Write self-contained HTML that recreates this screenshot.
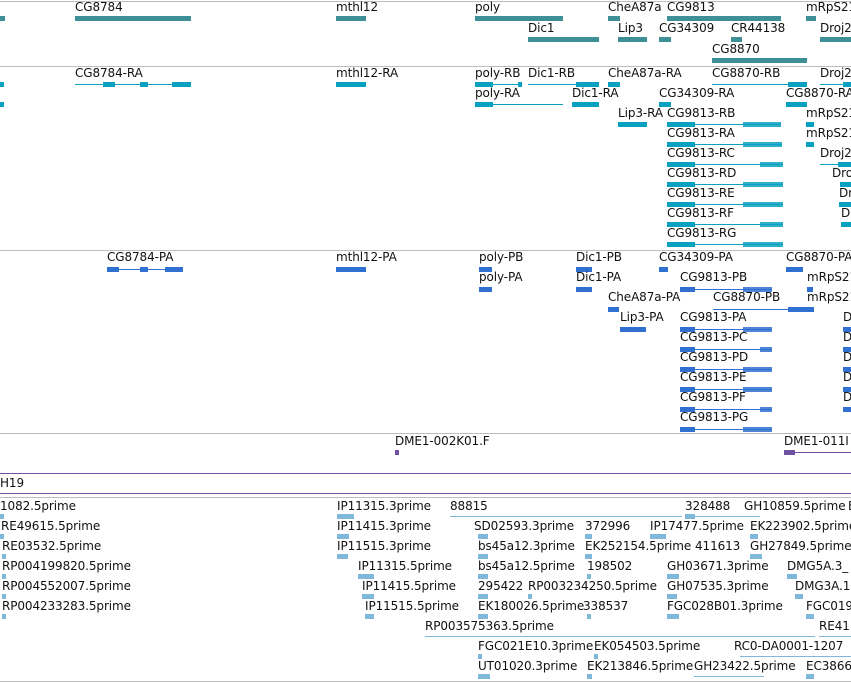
<!DOCTYPE html>
<html><head><meta charset="utf-8"><style>
body{margin:0;width:851px;height:682px;overflow:hidden;background:#fff;position:relative}
.t{position:absolute;font:12px "DejaVu Sans","Liberation Sans",sans-serif;line-height:13px;white-space:nowrap;color:#111;letter-spacing:-0.1px}
.b{position:absolute;height:5px}
.l{position:absolute;height:1px}
.h{position:absolute;left:0;width:851px;height:1px;background:#bdbdbd}
.g{background:#3f9096}.r{background:#0aa0c0}.p{background:#3070d0}.e{background:#80b8dc}.v{background:#7050a0}
</style></head><body>
<div class="h" style="top:1px"></div>
<div class="h" style="top:66px"></div>
<div class="h" style="top:250px"></div>
<div class="h" style="top:433px"></div>
<div class="h v" style="top:473px"></div>
<div class="h v" style="top:493px"></div>
<div class="h" style="top:497px"></div>
<div class="h" style="top:681px"></div>

<div class="b g" style="left:0;top:16px;width:5px"></div>
<div class="t" style="left:75px;top:1px">CG8784</div><div class="b g" style="left:75px;top:16px;width:116px"></div>
<div class="t" style="left:336px;top:1px">mthl12</div><div class="b g" style="left:336px;top:16px;width:30px"></div>
<div class="t" style="left:475px;top:1px">poly</div><div class="b g" style="left:475px;top:16px;width:88px"></div>
<div class="t" style="left:608px;top:1px">CheA87a</div><div class="b g" style="left:608px;top:16px;width:12px"></div>
<div class="t" style="left:667px;top:1px">CG9813</div><div class="b g" style="left:667px;top:16px;width:114px"></div>
<div class="t" style="left:806px;top:1px">mRpS21</div><div class="b g" style="left:806px;top:16px;width:10px"></div>
<div class="t" style="left:528px;top:22px">Dic1</div><div class="b g" style="left:528px;top:37px;width:71px"></div>
<div class="t" style="left:618px;top:22px">Lip3</div><div class="b g" style="left:618px;top:37px;width:29px"></div>
<div class="t" style="left:659px;top:22px">CG34309</div><div class="b g" style="left:659px;top:37px;width:12px"></div>
<div class="t" style="left:731px;top:22px">CR44138</div><div class="b g" style="left:731px;top:37px;width:11px"></div>
<div class="t" style="left:820px;top:22px">Droj2</div><div class="b g" style="left:820px;top:37px;width:31px"></div>
<div class="t" style="left:712px;top:43px">CG8870</div><div class="b g" style="left:712px;top:58px;width:95px"></div>

<div class="b r" style="left:0;top:82px;width:4px"></div><div class="b r" style="left:0;top:102px;width:4px"></div>
<div class="t" style="left:75px;top:67px">CG8784-RA</div><div class="l r" style="left:75px;top:84px;width:116px"></div><div class="b r" style="left:103px;top:82px;width:12px"></div><div class="b r" style="left:140px;top:82px;width:8px"></div><div class="b r" style="left:172px;top:82px;width:19px"></div>
<div class="t" style="left:336px;top:67px">mthl12-RA</div><div class="b r" style="left:336px;top:82px;width:30px"></div>
<div class="t" style="left:475px;top:67px">poly-RB</div><div class="l r" style="left:475px;top:84px;width:47px"></div><div class="b r" style="left:475px;top:82px;width:18px"></div><div class="b r" style="left:518px;top:82px;width:4px"></div>
<div class="t" style="left:528px;top:67px">Dic1-RB</div><div class="l r" style="left:528px;top:84px;width:71px"></div><div class="b r" style="left:576px;top:82px;width:23px"></div>
<div class="t" style="left:608px;top:67px">CheA87a-RA</div><div class="b r" style="left:608px;top:82px;width:12px"></div>
<div class="t" style="left:712px;top:67px">CG8870-RB</div><div class="l r" style="left:712px;top:84px;width:95px"></div><div class="b r" style="left:788px;top:82px;width:19px"></div>
<div class="t" style="left:820px;top:67px">Droj2</div><div class="l r" style="left:820px;top:84px;width:31px"></div><div class="b r" style="left:843px;top:82px;width:8px"></div>
<div class="t" style="left:475px;top:87px">poly-RA</div><div class="l r" style="left:475px;top:104px;width:88px"></div><div class="b r" style="left:475px;top:102px;width:18px"></div>
<div class="t" style="left:572px;top:87px">Dic1-RA</div><div class="b r" style="left:572px;top:102px;width:27px"></div>
<div class="t" style="left:659px;top:87px">CG34309-RA</div><div class="b r" style="left:659px;top:102px;width:12px"></div>
<div class="t" style="left:786px;top:87px">CG8870-RA</div><div class="b r" style="left:786px;top:102px;width:21px"></div>
<div class="t" style="left:618px;top:107px">Lip3-RA</div><div class="b r" style="left:618px;top:122px;width:29px"></div>
<div class="t" style="left:806px;top:107px">mRpS21</div><div class="b r" style="left:806px;top:122px;width:8px"></div>
<div class="t" style="left:806px;top:127px">mRpS21</div><div class="b r" style="left:806px;top:142px;width:8px"></div>
<div class="t" style="left:820px;top:147px">Droj2</div><div class="l r" style="left:820px;top:164px;width:31px"></div><div class="b r" style="left:838px;top:162px;width:13px"></div>
<div class="t" style="left:832px;top:167px">Dro</div><div class="b r" style="left:840px;top:182px;width:11px"></div>
<div class="t" style="left:839px;top:187px">Dr</div><div class="b r" style="left:839px;top:202px;width:12px"></div>
<div class="t" style="left:841px;top:207px">D</div><div class="b r" style="left:841px;top:222px;width:10px"></div>

<div class="t" style="left:667px;top:107px">CG9813-RB</div>
<div class="t" style="left:667px;top:127px">CG9813-RA</div>
<div class="t" style="left:667px;top:147px">CG9813-RC</div>
<div class="t" style="left:667px;top:167px">CG9813-RD</div>
<div class="t" style="left:667px;top:187px">CG9813-RE</div>
<div class="t" style="left:667px;top:207px">CG9813-RF</div>
<div class="t" style="left:667px;top:227px">CG9813-RG</div>
<div class="l r" style="left:667px;top:124px;width:114px"></div><div class="b r" style="left:667px;top:122px;width:28px"></div><div class="b r" style="left:743px;top:122px;width:38px;opacity:.85"></div>
<div class="l r" style="left:667px;top:144px;width:115px"></div><div class="b r" style="left:667px;top:142px;width:28px"></div><div class="b r" style="left:743px;top:142px;width:39px;opacity:.85"></div>
<div class="l r" style="left:667px;top:164px;width:116px"></div><div class="b r" style="left:667px;top:162px;width:28px"></div><div class="b r" style="left:760px;top:162px;width:23px;opacity:.85"></div>
<div class="l r" style="left:667px;top:184px;width:116px"></div><div class="b r" style="left:667px;top:182px;width:28px"></div><div class="b r" style="left:743px;top:182px;width:40px;opacity:.85"></div>
<div class="l r" style="left:667px;top:204px;width:116px"></div><div class="b r" style="left:667px;top:202px;width:28px"></div><div class="b r" style="left:743px;top:202px;width:40px;opacity:.85"></div>
<div class="l r" style="left:667px;top:224px;width:116px"></div><div class="b r" style="left:667px;top:222px;width:28px"></div><div class="b r" style="left:760px;top:222px;width:23px;opacity:.85"></div>
<div class="l r" style="left:667px;top:244px;width:116px"></div><div class="b r" style="left:667px;top:242px;width:28px"></div><div class="b r" style="left:743px;top:242px;width:40px;opacity:.85"></div>

<div class="t" style="left:107px;top:251px">CG8784-PA</div><div class="l p" style="left:107px;top:269px;width:76px"></div><div class="b p" style="left:107px;top:267px;width:12px"></div><div class="b p" style="left:140px;top:267px;width:8px"></div><div class="b p" style="left:165px;top:267px;width:18px"></div>
<div class="t" style="left:336px;top:251px">mthl12-PA</div><div class="b p" style="left:336px;top:267px;width:30px"></div>
<div class="t" style="left:479px;top:251px">poly-PB</div><div class="b p" style="left:479px;top:267px;width:13px"></div>
<div class="t" style="left:576px;top:251px">Dic1-PB</div><div class="b p" style="left:576px;top:267px;width:16px"></div>
<div class="t" style="left:659px;top:251px">CG34309-PA</div><div class="b p" style="left:659px;top:267px;width:9px"></div>
<div class="t" style="left:786px;top:251px">CG8870-PA</div><div class="b p" style="left:786px;top:267px;width:17px"></div>
<div class="t" style="left:479px;top:271px">poly-PA</div><div class="b p" style="left:479px;top:287px;width:13px"></div>
<div class="t" style="left:576px;top:271px">Dic1-PA</div><div class="b p" style="left:576px;top:287px;width:16px"></div>
<div class="t" style="left:807px;top:271px">mRpS21</div><div class="b p" style="left:807px;top:287px;width:6px"></div>
<div class="t" style="left:608px;top:291px">CheA87a-PA</div><div class="b p" style="left:608px;top:307px;width:11px"></div>
<div class="t" style="left:713px;top:291px">CG8870-PB</div><div class="l p" style="left:713px;top:309px;width:101px"></div><div class="b p" style="left:788px;top:307px;width:26px"></div>
<div class="t" style="left:807px;top:291px">mRpS21</div>
<div class="t" style="left:620px;top:311px">Lip3-PA</div><div class="b p" style="left:620px;top:327px;width:26px"></div>
<div class="t" style="left:680px;top:271px">CG9813-PB</div>
<div class="t" style="left:680px;top:311px">CG9813-PA</div>
<div class="t" style="left:680px;top:331px">CG9813-PC</div>
<div class="t" style="left:680px;top:351px">CG9813-PD</div>
<div class="t" style="left:680px;top:371px">CG9813-PE</div>
<div class="t" style="left:680px;top:391px">CG9813-PF</div>
<div class="t" style="left:680px;top:411px">CG9813-PG</div>
<div class="l p" style="left:680px;top:289px;width:92px"></div><div class="b p" style="left:680px;top:287px;width:15px"></div><div class="b p" style="left:743px;top:287px;width:29px;opacity:.85"></div>
<div class="l p" style="left:680px;top:329px;width:92px"></div><div class="b p" style="left:680px;top:327px;width:15px"></div><div class="b p" style="left:743px;top:327px;width:29px;opacity:.85"></div>
<div class="l p" style="left:680px;top:349px;width:92px"></div><div class="b p" style="left:680px;top:347px;width:15px"></div><div class="b p" style="left:760px;top:347px;width:12px;opacity:.85"></div>
<div class="l p" style="left:680px;top:369px;width:92px"></div><div class="b p" style="left:680px;top:367px;width:15px"></div><div class="b p" style="left:743px;top:367px;width:29px;opacity:.85"></div>
<div class="l p" style="left:680px;top:389px;width:92px"></div><div class="b p" style="left:680px;top:387px;width:15px"></div><div class="b p" style="left:743px;top:387px;width:29px;opacity:.85"></div>
<div class="l p" style="left:680px;top:409px;width:92px"></div><div class="b p" style="left:680px;top:407px;width:15px"></div><div class="b p" style="left:760px;top:407px;width:12px;opacity:.85"></div>
<div class="l p" style="left:680px;top:429px;width:92px"></div><div class="b p" style="left:680px;top:427px;width:15px"></div><div class="b p" style="left:743px;top:427px;width:29px;opacity:.85"></div>
<div class="t" style="left:843px;top:311px">D</div><div class="b p" style="left:843px;top:327px;width:8px"></div>
<div class="t" style="left:843px;top:331px">D</div><div class="b p" style="left:843px;top:347px;width:8px"></div>
<div class="t" style="left:843px;top:351px">D</div><div class="b p" style="left:843px;top:367px;width:8px"></div>
<div class="t" style="left:843px;top:371px">D</div><div class="b p" style="left:843px;top:387px;width:8px"></div>
<div class="t" style="left:843px;top:391px">D</div><div class="b p" style="left:843px;top:407px;width:8px"></div>

<div class="t" style="left:395px;top:435px">DME1-002K01.F</div><div class="b v" style="left:395px;top:450px;width:4px"></div>
<div class="t" style="left:784px;top:435px">DME1-011I</div><div class="l v" style="left:784px;top:452px;width:67px"></div><div class="b v" style="left:784px;top:450px;width:11px"></div>
<div class="t" style="left:0;top:477px">H19</div>

<div class="t" style="left:0;top:500px">1082.5prime</div><div class="b e" style="left:0;top:514px;width:4px"></div>
<div class="t" style="left:337px;top:500px">IP11315.3prime</div><div class="b e" style="left:337px;top:514px;width:17px"></div>
<div class="t" style="left:450px;top:500px">88815</div><div class="l e" style="left:450px;top:516px;width:232px"></div>
<div class="t" style="left:685px;top:500px">328488</div><div class="b e" style="left:685px;top:514px;width:10px"></div><div class="l e" style="left:685px;top:516px;width:75px"></div>
<div class="t" style="left:744px;top:500px">GH10859.5prime</div>
<div class="t" style="left:848px;top:500px">E</div>

<div class="t" style="left:1px;top:520px">RE49615.5prime</div><div class="b e" style="left:0;top:534px;width:4px"></div>
<div class="t" style="left:337px;top:520px">IP11415.3prime</div><div class="b e" style="left:337px;top:534px;width:12px"></div>
<div class="t" style="left:474px;top:520px">SD02593.3prime</div><div class="b e" style="left:478px;top:534px;width:10px"></div>
<div class="t" style="left:585px;top:520px">372996</div><div class="b e" style="left:585px;top:534px;width:7px"></div>
<div class="t" style="left:650px;top:520px">IP17477.5prime</div><div class="b e" style="left:650px;top:534px;width:16px"></div>
<div class="t" style="left:750px;top:520px">EK223902.5prime</div><div class="b e" style="left:750px;top:534px;width:8px"></div>

<div class="t" style="left:2px;top:540px">RE03532.5prime</div><div class="b e" style="left:2px;top:554px;width:4px"></div>
<div class="t" style="left:337px;top:540px">IP11515.3prime</div><div class="b e" style="left:337px;top:554px;width:11px"></div>
<div class="t" style="left:478px;top:540px">bs45a12.3prime</div><div class="b e" style="left:478px;top:554px;width:10px"></div>
<div class="t" style="left:585px;top:540px">EK252154.5prime</div><div class="b e" style="left:585px;top:554px;width:7px"></div>
<div class="t" style="left:695px;top:540px">411613</div>
<div class="t" style="left:750px;top:540px">GH27849.5prime</div><div class="b e" style="left:750px;top:554px;width:12px"></div>

<div class="t" style="left:2px;top:560px">RP004199820.5prime</div><div class="b e" style="left:2px;top:574px;width:4px"></div>
<div class="t" style="left:358px;top:560px">IP11315.5prime</div><div class="b e" style="left:358px;top:574px;width:16px"></div>
<div class="t" style="left:478px;top:560px">bs45a12.5prime</div><div class="b e" style="left:478px;top:574px;width:10px"></div>
<div class="t" style="left:587px;top:560px">198502</div><div class="b e" style="left:587px;top:574px;width:4px"></div>
<div class="t" style="left:667px;top:560px">GH03671.3prime</div><div class="b e" style="left:667px;top:574px;width:12px"></div>
<div class="t" style="left:787px;top:560px">DMG5A.3_</div><div class="b e" style="left:787px;top:574px;width:10px"></div>

<div class="t" style="left:2px;top:580px">RP004552007.5prime</div><div class="b e" style="left:2px;top:594px;width:4px"></div>
<div class="t" style="left:362px;top:580px">IP11415.5prime</div><div class="b e" style="left:362px;top:594px;width:12px"></div>
<div class="t" style="left:478px;top:580px">295422</div><div class="b e" style="left:478px;top:594px;width:10px"></div>
<div class="t" style="left:528px;top:580px">RP003234250.5prime</div><div class="b e" style="left:528px;top:594px;width:4px"></div>
<div class="t" style="left:667px;top:580px">GH07535.3prime</div><div class="b e" style="left:667px;top:594px;width:10px"></div>
<div class="t" style="left:795px;top:580px">DMG3A.1</div><div class="b e" style="left:795px;top:594px;width:8px"></div>

<div class="t" style="left:2px;top:600px">RP004233283.5prime</div><div class="b e" style="left:2px;top:614px;width:4px"></div>
<div class="t" style="left:365px;top:600px">IP11515.5prime</div><div class="b e" style="left:365px;top:614px;width:9px"></div>
<div class="t" style="left:478px;top:600px">EK180026.5prime</div><div class="b e" style="left:478px;top:614px;width:10px"></div>
<div class="t" style="left:583px;top:600px">338537</div><div class="b e" style="left:587px;top:614px;width:4px"></div>
<div class="t" style="left:667px;top:600px">FGC028B01.3prime</div><div class="b e" style="left:667px;top:614px;width:12px"></div>
<div class="t" style="left:806px;top:600px">FGC019</div><div class="b e" style="left:806px;top:614px;width:8px"></div>

<div class="t" style="left:425px;top:620px">RP003575363.5prime</div><div class="l e" style="left:425px;top:636px;width:390px"></div>
<div class="t" style="left:819px;top:620px">RE41</div><div class="l e" style="left:819px;top:636px;width:32px"></div>

<div class="t" style="left:478px;top:640px">FGC021E10.3prime</div><div class="b e" style="left:478px;top:654px;width:4px"></div>
<div class="t" style="left:594px;top:640px">EK054503.5prime</div><div class="b e" style="left:594px;top:654px;width:4px"></div>
<div class="t" style="left:734px;top:640px">RC0-DA0001-1207</div><div class="l e" style="left:740px;top:656px;width:111px"></div>

<div class="t" style="left:478px;top:660px">UT01020.3prime</div><div class="b e" style="left:478px;top:674px;width:12px"></div>
<div class="t" style="left:587px;top:660px">EK213846.5prime</div><div class="b e" style="left:587px;top:674px;width:5px"></div>
<div class="t" style="left:694px;top:660px">GH23422.5prime</div><div class="l e" style="left:694px;top:676px;width:70px"></div>
<div class="t" style="left:806px;top:660px">EC3866</div><div class="b e" style="left:806px;top:674px;width:8px"></div>
</body></html>
